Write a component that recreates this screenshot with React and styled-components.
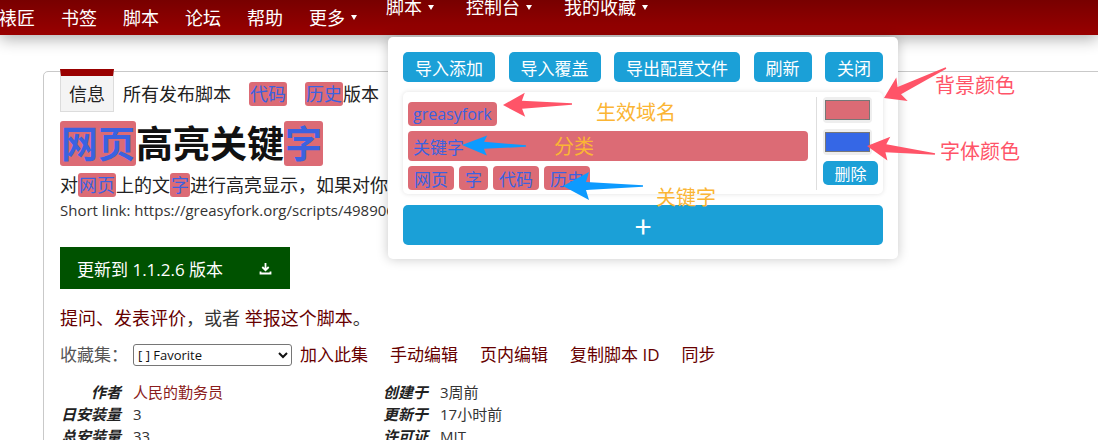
import React from "react";
import styled, { createGlobalStyle } from "styled-components";

const GlobalStyle = createGlobalStyle`
  html, body {
    margin: 0;
    padding: 0;
    background: #fff;
  }
  body {
    font-family: "Open Sans", "Noto Sans CJK SC", sans-serif;
    color: #222;
    width: 1098px;
    height: 440px;
    overflow: hidden;
    position: relative;
  }
`;

const Header = styled.header`
  position: relative;
  z-index: 2;
  height: 35px;
  display: flex;
  align-items: center;
  background: linear-gradient(#780000, #990000);
  box-shadow: 0 4px 16px rgba(0, 0, 0, 0.32);
`;

const NavGroup = styled.nav`
  display: flex;
  gap: ${(p) => p.$gap}px;
  margin-left: ${(p) => p.$offset}px;
  ${(p) => p.$raised && "align-self: flex-start; margin-top: -4px;"}
`;

const NavLink = styled.a`
  display: flex;
  align-items: center;
  color: #fff;
  font-size: 18px;
  line-height: 22px;
  text-decoration: none;
  white-space: nowrap;
`;

const Caret = styled.span`
  width: 0;
  height: 0;
  margin-left: 6px;
  border-left: 3.5px solid transparent;
  border-right: 3.5px solid transparent;
  border-top: 5px solid #fff;
`;

const Main = styled.main`
  padding-left: 43px;
`;

const Card = styled.section`
  margin: 36px -12px 0 0;
  padding-left: 16px;
  border: 1px solid #c9c9c9;
  border-radius: 5px 0 0 0;
  height: 420px;
`;

const Tabs = styled.ul`
  display: flex;
  list-style: none;
  margin: -3px 0 0;
  padding: 0;
`;

const Tab = styled.li`
  display: flex;
  align-items: center;
  height: 35px;
  padding: 0 8px;
  font-size: 18px;
  line-height: 24px;
  color: #222;
  border-top: 7px solid ${(p) => (p.$active ? "#990000" : "transparent")};
  border-left: 1px solid ${(p) => (p.$active ? "#dcdcdc" : "transparent")};
  border-right: 1px solid ${(p) => (p.$active ? "#dcdcdc" : "transparent")};
  border-bottom: 1px solid ${(p) => (p.$active ? "#dcdcdc" : "transparent")};
  background: ${(p) => (p.$active ? "#f4f4f4" : "transparent")};
`;

const Mark = styled.span`
  display: inline-block;
  background: #dc6b75;
  color: #3b62e0;
  border-radius: 3px;
  padding: 0 1px;
`;

const Title = styled.h2`
  margin: 9px 0 0;
  font-size: 37px;
  line-height: 45px;
  font-weight: bold;
  color: #111;
`;

const Description = styled.p`
  margin: 7px 0 0;
  font-size: 18px;
  line-height: 24px;
  color: #222;
`;

const ShortLink = styled.div`
  margin-top: 3px;
  font-size: 15px;
  line-height: 20px;
  color: #333;
`;

const InstallButton = styled.a`
  margin-top: 27px;
  display: flex;
  align-items: center;
  justify-content: space-between;
  box-sizing: border-box;
  width: 230px;
  height: 42px;
  padding: 0 18px 0 17px;
  background: #005200;
  color: #fff;
  font-size: 17px;
  text-decoration: none;
`;

const Feedback = styled.p`
  margin: 17px 0 0;
  font-size: 18px;
  line-height: 24px;
  color: #670000;
`;

const Plain = styled.span`
  color: #333;
`;

const CollectionRow = styled.div`
  margin-top: 13px;
  display: flex;
  align-items: center;
  font-size: 17px;
  line-height: 24px;
`;

const CollectionLabel = styled.span`
  color: #555;
`;

const Select = styled.select`
  margin: 0 8px 0 5px;
  width: 159px;
  height: 22px;
  font-family: "Open Sans", sans-serif;
  font-size: 13px;
  color: #111;
  background: #fff;
  border: 1px solid #767676;
  border-radius: 3px;
`;

const CollectionLinks = styled.div`
  display: flex;
  gap: 22px;
  color: #670000;
`;

const Meta = styled.dl`
  margin: 14px 0 0;
  display: grid;
  grid-template-columns: 61px 222px 61px auto;
  column-gap: 12px;
  font-size: 15px;
  line-height: 22px;
`;

const MetaLabel = styled.dt`
  font-style: italic;
  font-weight: bold;
  text-align: right;
  color: #222;
`;

const MetaValue = styled.dd`
  margin: 0;
  color: ${(p) => (p.$link ? "#8b1c1c" : "#333")};
`;

/* floating settings panel of the userscript */
const Panel = styled.div`
  position: absolute;
  left: 388px;
  top: 37px;
  z-index: 3;
  width: 480px;
  padding: 15px 15px 14px;
  background: #fff;
  border-radius: 5px;
  box-shadow: 0 0 12px rgba(0, 0, 0, 0.22);
`;

const Toolbar = styled.div`
  display: flex;
  justify-content: space-between;
`;

const BlueButton = styled.button`
  height: ${(p) => p.$h || 30}px;
  padding: 0 12px;
  border: none;
  border-radius: 5px;
  background: #1ba0d7;
  color: #fff;
  font-family: "Noto Sans CJK SC", sans-serif;
  font-size: ${(p) => p.$size || 17}px;
  line-height: 1;
  ${(p) => p.$wide && "width: 100%; margin-top: 11px; display: block;"}
`;

const RuleCard = styled.div`
  margin-top: 10px;
  display: flex;
  padding: 5px 5px 4px;
  border-radius: 5px;
  box-shadow: 0 0 5px rgba(0, 0, 0, 0.12);
`;

const RuleBody = styled.div`
  flex: 1;
  display: flex;
  flex-direction: column;
  align-items: flex-start;
  gap: 5px;
  padding-top: 5px;
`;

const Tag = styled.span`
  display: inline-flex;
  align-items: center;
  height: ${(p) => p.$h || 24}px;
  padding: 0 ${(p) => p.$pad || 6}px;
  background: #dc6b75;
  color: #3b62e0;
  border-radius: 4px;
  font-size: ${(p) => p.$size || 17}px;
  box-sizing: border-box;
  ${(p) => p.$block && "align-self: stretch;"}
`;

const TagRow = styled.div`
  display: flex;
  gap: 5px;
`;

const RuleSide = styled.div`
  margin-left: 8px;
  padding-left: 6px;
  border-left: 1px solid #dedede;
  display: flex;
  flex-direction: column;
  gap: 6px;
  width: 55px;
`;

const Swatch = styled.div`
  width: 49px;
  height: 26px;
  padding: 3px 2px;
  box-sizing: border-box;
  background: #eee;
  border-radius: 4px;
  &::after {
    content: "";
    display: block;
    height: 100%;
    box-sizing: border-box;
    border: 1px solid #777;
    background: ${(p) => p.$color};
  }
`;

const Overlay = styled.svg`
  position: absolute;
  left: 0;
  top: 0;
  z-index: 4;
  pointer-events: none;
`;

const Note = styled.span`
  position: absolute;
  z-index: 5;
  left: ${(p) => p.$x}px;
  top: ${(p) => p.$y}px;
  font-family: "Noto Sans CJK SC", sans-serif;
  font-size: 20px;
  line-height: 24px;
  color: ${(p) => p.$color};
  white-space: nowrap;
`;

const RED = "#ff5468";
const BLUE = "#0d9bff";
const ORANGE = "#fbb534";

function arrowPoints(tip, tail, headLen, headW, shaftW) {
  const dx = tail[0] - tip[0];
  const dy = tail[1] - tip[1];
  const len = Math.hypot(dx, dy);
  const ux = dx / len;
  const uy = dy / len;
  const nx = -uy;
  const ny = ux;
  const b = [tip[0] + ux * headLen, tip[1] + uy * headLen];
  const n = [tip[0] + ux * (headLen - 3), tip[1] + uy * (headLen - 3)];
  const pts = [
    tip,
    [b[0] + (nx * headW) / 2, b[1] + (ny * headW) / 2],
    [n[0] + (nx * shaftW) / 2, n[1] + (ny * shaftW) / 2],
    [tail[0] + nx * 0.8, tail[1] + ny * 0.8],
    [tail[0] - nx * 0.8, tail[1] - ny * 0.8],
    [n[0] - (nx * shaftW) / 2, n[1] - (ny * shaftW) / 2],
    [b[0] - (nx * headW) / 2, b[1] - (ny * headW) / 2],
  ];
  return pts.map((p) => p.map((v) => v.toFixed(1)).join(",")).join(" ");
}

const arrows = [
  { tip: [503, 105], tail: [572, 104], head: 22, w: 24, s: 8, color: RED },
  { tip: [462, 145], tail: [526, 146], head: 25, w: 20, s: 7, color: BLUE },
  { tip: [563, 186], tail: [643, 186], head: 26, w: 28, s: 8, color: BLUE },
  { tip: [884, 98], tail: [946, 68], head: 20, w: 26, s: 8, color: RED },
  { tip: [867, 146], tail: [935, 154], head: 22, w: 24, s: 8, color: RED },
];

const DownloadIcon = () => (
  <svg width="13" height="13" viewBox="0 0 13 13" fill="none" stroke="#fff" strokeWidth="1.8">
    <path d="M6.5 1v7M3.3 5l3.2 3.2L9.7 5M1.5 9.5v2h10v-2" />
  </svg>
);

const mainNav = ["裱匠", "书签", "脚本", "论坛", "帮助"];
const userNav = ["脚本", "控制台", "我的收藏"];

export default function App() {
  return (
    <>
      <GlobalStyle />
      <Header>
        <NavGroup $gap={26} $offset={-1}>
          {mainNav.map((t) => (
            <NavLink key={t}>{t}</NavLink>
          ))}
          <NavLink>
            更多
            <Caret />
          </NavLink>
        </NavGroup>
        <NavGroup $gap={32} $offset={29} $raised>
          {userNav.map((t) => (
            <NavLink key={t}>
              {t}
              <Caret />
            </NavLink>
          ))}
        </NavGroup>
      </Header>

      <Main>
        <Card>
          <Tabs>
            <Tab $active>信息</Tab>
            <Tab>所有发布脚本</Tab>
            <Tab>
              <Mark>代码</Mark>
            </Tab>
            <Tab>
              <Mark>历史</Mark>版本
            </Tab>
          </Tabs>
          <Title>
            <Mark>网页</Mark>高亮关键<Mark>字</Mark>
          </Title>
          <Description>
            对<Mark>网页</Mark>上的文<Mark>字</Mark>进行高亮显示，如果对你有帮助，可以点个收藏
          </Description>
          <ShortLink>Short link: https://greasyfork.org/scripts/498906</ShortLink>
          <InstallButton>
            <span>更新到 1.1.2.6 版本</span>
            <DownloadIcon />
          </InstallButton>
          <Feedback>
            提问、发表评价<Plain>，或者 </Plain>举报这个脚本<Plain>。</Plain>
          </Feedback>
          <CollectionRow>
            <CollectionLabel>收藏集：</CollectionLabel>
            <Select defaultValue="fav">
              <option value="fav">[ ] Favorite</option>
            </Select>
            <CollectionLinks>
              <span>加入此集</span>
              <span>手动编辑</span>
              <span>页内编辑</span>
              <span>复制脚本 ID</span>
              <span>同步</span>
            </CollectionLinks>
          </CollectionRow>
          <Meta>
            <MetaLabel>作者</MetaLabel>
            <MetaValue $link>人民的勤务员</MetaValue>
            <MetaLabel>创建于</MetaLabel>
            <MetaValue>3周前</MetaValue>
            <MetaLabel>日安装量</MetaLabel>
            <MetaValue>3</MetaValue>
            <MetaLabel>更新于</MetaLabel>
            <MetaValue>17小时前</MetaValue>
            <MetaLabel>总安装量</MetaLabel>
            <MetaValue>33</MetaValue>
            <MetaLabel>许可证</MetaLabel>
            <MetaValue>MIT</MetaValue>
          </Meta>
        </Card>
      </Main>

      <Panel>
        <Toolbar>
          <BlueButton>导入添加</BlueButton>
          <BlueButton>导入覆盖</BlueButton>
          <BlueButton>导出配置文件</BlueButton>
          <BlueButton>刷新</BlueButton>
          <BlueButton>关闭</BlueButton>
        </Toolbar>
        <RuleCard>
          <RuleBody>
            <Tag $pad={5} $size={16}>greasyfork</Tag>
            <Tag $block $h={30} $pad={5}>
              关键字
            </Tag>
            <TagRow>
              <Tag>网页</Tag>
              <Tag>字</Tag>
              <Tag>代码</Tag>
              <Tag>历史</Tag>
            </TagRow>
          </RuleBody>
          <RuleSide>
            <Swatch $color="#dc6b75" />
            <Swatch $color="#3567e6" />
            <BlueButton $h={24} $size={16} style={{ padding: 0 }}>
              删除
            </BlueButton>
          </RuleSide>
        </RuleCard>
        <BlueButton $wide $h={40} $size={30}>
          +
        </BlueButton>
      </Panel>

      <Overlay width="1098" height="440">
        {arrows.map((a, i) => (
          <polygon key={i} points={arrowPoints(a.tip, a.tail, a.head, a.w, a.s)} fill={a.color} />
        ))}
      </Overlay>
      <Note $x={596} $y={100} $color={ORANGE}>生效域名</Note>
      <Note $x={554} $y={134} $color={ORANGE}>分类</Note>
      <Note $x={656} $y={185} $color={ORANGE}>关键字</Note>
      <Note $x={935} $y={73} $color={RED}>背景颜色</Note>
      <Note $x={940} $y={139} $color={RED}>字体颜色</Note>
    </>
  );
}
